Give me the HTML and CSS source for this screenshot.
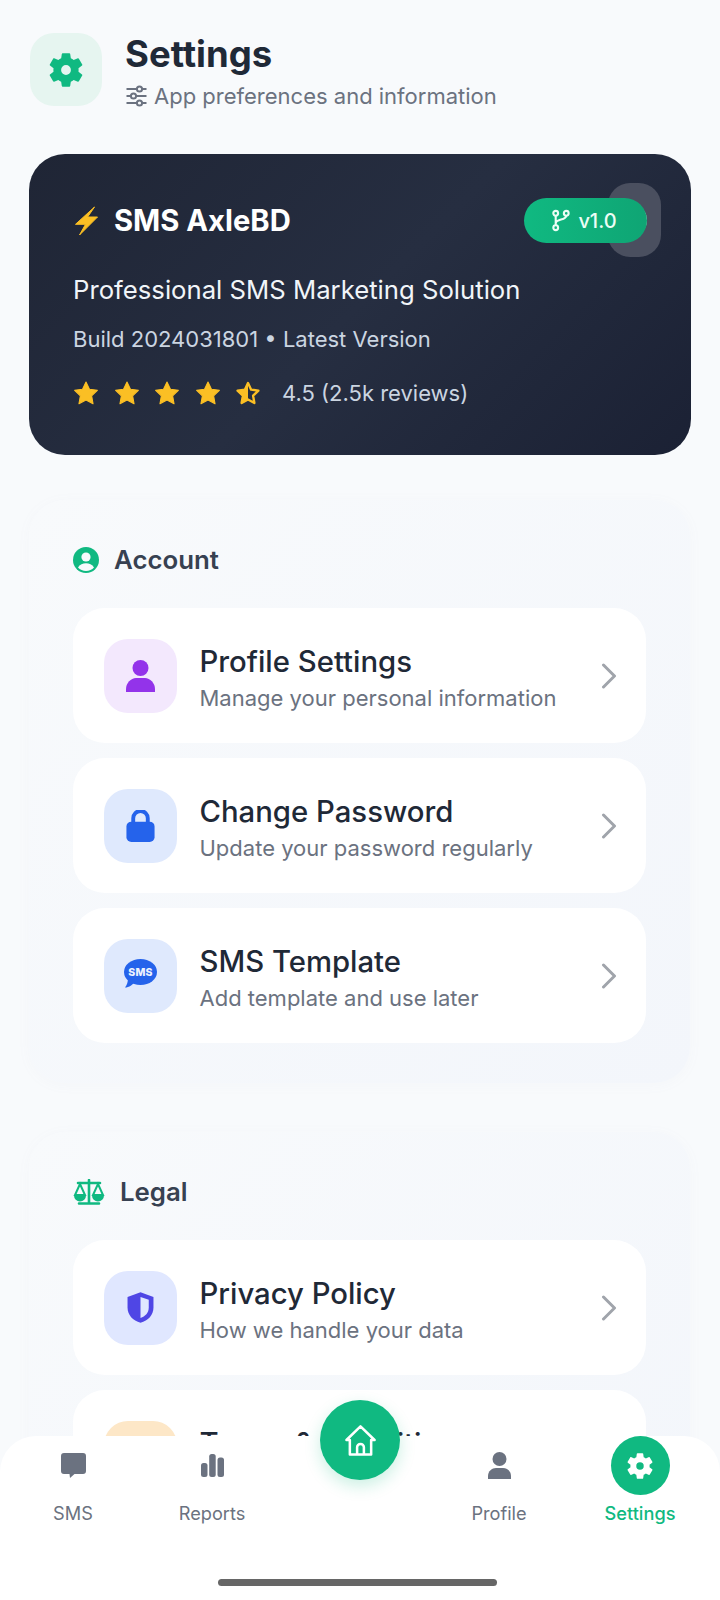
FILE: index.html
```html
<!DOCTYPE html>
<html lang="en">
<head>
<meta charset="utf-8">
<title>Settings</title>
<link rel="stylesheet" href="styles.css">
</head>
<body>
<svg class="defs" width="0" height="0" aria-hidden="true">
  <defs>
    <symbol id="gear" viewBox="0 0 24 24"><path fill-rule="evenodd" d="M19.14 12.94c.04-.3.06-.61.06-.94 0-.32-.02-.64-.07-.94l2.03-1.58a.49.49 0 0 0 .12-.61l-1.92-3.32a.488.488 0 0 0-.59-.22l-2.39.96c-.5-.38-1.03-.7-1.62-.94l-.36-2.54a.484.484 0 0 0-.48-.41h-3.84c-.24 0-.43.17-.47.41l-.36 2.54c-.59.24-1.13.57-1.62.94l-2.39-.96c-.22-.08-.47 0-.59.22L2.74 8.87c-.12.21-.08.47.12.61l2.03 1.58c-.05.3-.09.63-.09.94s.02.64.07.94l-2.03 1.58a.49.49 0 0 0-.12.61l1.92 3.32c.12.22.37.29.59.22l2.39-.96c.5.38 1.03.7 1.62.94l.36 2.54c.05.24.24.41.48.41h3.84c.24 0 .44-.17.47-.41l.36-2.54c.59-.24 1.13-.56 1.62-.94l2.39.96c.22.08.47 0 .59-.22l1.92-3.32c.12-.22.07-.47-.12-.61l-2.01-1.58zM12 14.8a2.8 2.8 0 1 1 0-5.6 2.8 2.8 0 0 1 0 5.6z"/></symbol>
    <symbol id="star" viewBox="0 0 24 24"><path d="M12 1.8l3.2 6.700 7.300 1-5.300 5.100 1.300 7.300-6.500-3.500-6.500 3.500 1.300-7.300L1.500 9.500l7.300-1z" stroke-linejoin="round"/></symbol>
    <symbol id="chev" viewBox="0 0 16 26"><path d="M2.500 2l11 11-11 11" fill="none" stroke="currentColor" stroke-width="3" stroke-linecap="round" stroke-linejoin="round"/></symbol>
  </defs>
</svg>

<main class="screen">
  <header class="top">
    <div class="top-icon"><svg class="gear-lg"><use href="#gear"/></svg></div>
    <div class="top-text">
      <h1>Settings</h1>
      <p class="sub">
        <svg class="sliders" viewBox="1.500 1 21 22"><path d="M2 5h20M2 12h20M2 19h20" stroke="currentColor" stroke-width="2" fill="none"/><circle cx="15" cy="5" r="2.600" fill="#f8fafc" stroke="currentColor" stroke-width="2"/><circle cx="9" cy="12" r="2.600" fill="#f8fafc" stroke="currentColor" stroke-width="2"/><circle cx="15" cy="19" r="2.600" fill="#f8fafc" stroke="currentColor" stroke-width="2"/></svg>
        App preferences and information
      </p>
    </div>
  </header>

  <section class="hero">
    <div class="hero-blob"><span class="blob-glyph"></span></div>
    <div class="hero-head">
      <div class="brand">
        <svg class="bolt" viewBox="0 0 25 30"><path d="M20.500 1L1.500 18.300h10L5.500 29 23.500 11H13.600z" fill="#fbbf24" stroke="#fbbf24" stroke-width="1" stroke-linejoin="round"/></svg>
        <h2>SMS AxleBD</h2>
      </div>
      <div class="pill">
        <svg class="branch" viewBox="0 0 24 24" fill="none" stroke="currentColor" stroke-width="2.200"><circle cx="7" cy="4.500" r="2.500"/><circle cx="7" cy="19.500" r="2.500"/><circle cx="18" cy="4.500" r="2.500"/><path d="M7 7v10M18 7c0 5-11 3-11 8"/></svg>
        v1.0
      </div>
    </div>
    <p class="tagline">Professional SMS Marketing Solution</p>
    <p class="build">Build 2024031801 • Latest Version</p>
    <div class="rating">
      <div class="stars">
        <svg class="star"><use href="#star"/></svg>
        <svg class="star"><use href="#star"/></svg>
        <svg class="star"><use href="#star"/></svg>
        <svg class="star"><use href="#star"/></svg>
        <svg class="star star-half" viewBox="0 0 24 24"><path d="M12 2.800l2.900 6.100 6.700.9-4.900 4.700 1.200 6.700-5.900-3.200-5.900 3.200 1.200-6.700-4.900-4.700 6.700-.9z" fill="none" stroke-width="2.200" stroke-linejoin="round"/><path d="M12 1.800v16.800l-6.500 3.500 1.300-7.300L1.500 9.800l7.300-1z" stroke="none"/></svg>
      </div>
      <span class="rating-text">4.5 (2.5k reviews)</span>
    </div>
  </section>

  <section class="group">
    <div class="group-head">
      <svg class="acct" viewBox="0 0 26 26"><circle cx="13" cy="13" r="13" fill="#10b981"/><circle cx="13" cy="10" r="4.600" fill="#f8fafc"/><path d="M5 20.500c1.800-3 4.800-4.200 8-4.200s6.200 1.200 8 4.200C19 22.800 16.200 24 13 24s-6-1.200-8-3.500z" fill="#f8fafc"/></svg>
      <h3>Account</h3>
    </div>
    <div class="items">
      <article class="item">
        <div class="item-icon tint-purple"><svg class="glyph c-purple" viewBox="0 0 29 32"><circle cx="14.500" cy="8" r="8"/><path d="M0 29c0-6 5-11 10-11h9c5 0 10 5 10 11v3H0z"/></svg></div>
        <div class="item-text"><h4>Profile Settings</h4><p>Manage your personal information</p></div>
        <svg class="chev"><use href="#chev"/></svg>
      </article>
      <article class="item">
        <div class="item-icon tint-blue"><svg class="glyph c-blue" viewBox="0 0 29 33"><rect y="12" width="29" height="21" rx="5"/><path d="M7 14V8.500a7.500 7.500 0 0 1 15 0V14" fill="none" stroke="#2563eb" stroke-width="4"/></svg></div>
        <div class="item-text"><h4>Change Password</h4><p>Update your password regularly</p></div>
        <svg class="chev"><use href="#chev"/></svg>
      </article>
      <article class="item">
        <div class="item-icon tint-blue">
          <div class="sms-badge"><svg class="sms-tail" viewBox="0 0 10 10"><path d="M3 0C3 4 2 7 0 9.500 4 9.500 8 7 10 3z"/></svg><span>SMS</span></div>
        </div>
        <div class="item-text"><h4>SMS Template</h4><p>Add template and use later</p></div>
        <svg class="chev"><use href="#chev"/></svg>
      </article>
    </div>
  </section>

  <section class="group group-legal">
    <div class="group-head legal-head">
      <svg class="scale" viewBox="0 0 32 26" fill="none" stroke="#10b981" stroke-width="2.600"><path d="M16 1v22M5 4h22M6 24.500h20" stroke-linecap="round"/><path d="M7 5L2 16h10zM25 5l-5 11h10z" stroke-width="2"/><path d="M1 16.500a6 6 0 0 0 12 0zM19 16.500a6 6 0 0 0 12 0z" fill="#10b981" stroke="none"/></svg>
      <h3>Legal</h3>
    </div>
    <div class="items">
      <article class="item">
        <div class="item-icon tint-indigo"><svg class="glyph shield" viewBox="0 0 24 28"><path d="M12 1L23 5v9c0 6.500-4.500 11-11 13C5.500 25 1 20.500 1 14V5z" fill="#4f46e5"/><path d="M12 5l7 2.500V14c0 4.500-3 7.500-7 9z" fill="#e0e7ff"/></svg></div>
        <div class="item-text"><h4>Privacy Policy</h4><p>How we handle your data</p></div>
        <svg class="chev"><use href="#chev"/></svg>
      </article>
      <article class="item">
        <div class="item-icon tint-orange"></div>
        <div class="item-text"><h4>Terms &amp; Conditions</h4><p>Rules and guidelines</p></div>
        <svg class="chev"><use href="#chev"/></svg>
      </article>
    </div>
  </section>
</main>

<nav class="nav">
  <a class="nav-item">
    <span class="nav-icon"><svg class="ni-chat" viewBox="0 0 25 25"><path d="M3 0h19a3 3 0 0 1 3 3v15a3 3 0 0 1-3 3H13.500L9 25l-.5-4H3a3 3 0 0 1-3-3V3a3 3 0 0 1 3-3z"/></svg></span>
    <span class="nav-label">SMS</span>
  </a>
  <a class="nav-item">
    <span class="nav-icon"><svg class="ni-bars" viewBox="0 0 23 23"><rect x="0" y="9" width="6.500" height="14" rx="2.500"/><rect x="8.200" y="0" width="6.500" height="23" rx="2.500"/><rect x="16.500" y="3.500" width="6.500" height="19.500" rx="2.500"/></svg></span>
    <span class="nav-label">Reports</span>
  </a>
  <a class="nav-item">
    <span class="nav-icon"><svg class="ni-person" viewBox="0 0 23 27"><circle cx="11.500" cy="7" r="7"/><path d="M0 24c0-5 4-8 8-8h7c4 0 8 3 8 8v3H0z"/></svg></span>
    <span class="nav-label">Profile</span>
  </a>
  <a class="nav-item active">
    <span class="nav-icon"><svg class="ni-gear"><use href="#gear"/></svg></span>
    <span class="nav-label">Settings</span>
  </a>
  <button class="fab" type="button" aria-label="Home">
    <svg viewBox="0 0 32 32" fill="none" stroke="#fff" stroke-width="2.600" stroke-linejoin="round" stroke-linecap="round"><path d="M1.500 15.500L16 1.500l14.500 14H27V30.500H5V15.500zM12.500 30.500V23a3.500 3.500 0 0 1 7 0v7.500"/></svg>
  </button>
  <div class="home-bar"></div>
</nav>
</body>
</html>
```

FILE: styles.css
```css
* { box-sizing: border-box; margin: 0; padding: 0; }
html, body { height: 1600px; overflow: hidden; }
body {
  font-family: Inter, "Noto Sans", "Liberation Sans", sans-serif;
  background: #f8fafc;
  color: #1f2937;
  position: relative;
}
.defs { position: absolute; }

.screen { padding: 33px 30px 0 29px; height: 1600px; overflow: hidden; }

.top { display: flex; gap: 23px; align-items: flex-start; margin-left: 1px; }
.top-icon {
  width: 72px; height: 73px; border-radius: 24px; background: #e6f5f0;
  display: flex; align-items: center; justify-content: center; flex: none;
}
.gear-lg { width: 42px; height: 42px; fill: #10b981; }
.top-text { padding-top: 1px; }
.top-text h1 { font-size: 36.500px; font-weight: 700; line-height: 40px; color: #1f2937; }
.sub {
  display: flex; align-items: center; gap: 6px;
  font-size: 22px; line-height: 32px; color: #6b7280; margin-top: 6px;
}
.sliders { width: 23px; height: 22px; color: #6b7280; flex: none; }

.hero {
  position: relative; margin-top: 42px; width: 662px; height: 301px; border-radius: 36px;
  padding: 44px 44px 0 44px; color: #fff; overflow: hidden;
  background: linear-gradient(135deg, #1f2535 0%, #262e41 50%, #1b2134 100%);
}
.hero-blob {
  position: absolute; left: 579px; top: 29px; width: 53px; height: 74px; border-radius: 22px;
  background: #4a4f5f;
}
.blob-glyph {
  position: absolute; left: 23px; top: 25px; width: 16px; height: 24px; border-radius: 50%;
  border: 3px solid #e5e7eb;
}
.hero-head { position: relative; display: flex; justify-content: space-between; align-items: center; height: 45px; padding-right: 1px; }
.brand { display: flex; align-items: center; gap: 15px; padding-left: 1px; }
.bolt { width: 25px; height: 30px; flex: none; }
.brand h2 { font-size: 29.200px; font-weight: 700; line-height: 34px; }
.pill {
  display: flex; align-items: center; justify-content: center; gap: 6px;
  width: 123px; height: 45px; border-radius: 23px; padding-right: 5px;
  background: linear-gradient(90deg, #10b981, #0fa574);
  font-size: 20px; font-weight: 500; color: #ecfdf5;
  position: relative; left: 1px;
}
.branch { width: 23px; height: 23px; }
.tagline { font-size: 25.700px; line-height: 36px; margin-top: 29px; color: #f1f5f9; }
.build { font-size: 22px; line-height: 30px; margin-top: 16px; color: #cbd5e1; }
.rating { display: flex; align-items: center; margin-top: 26px; }
.stars { display: flex; gap: 14.500px; }
.star { width: 26px; height: 26px; fill: #fbbf24; stroke: #fbbf24; stroke-width: 1; }
.rating-text { font-size: 22px; margin-left: 21px; color: #cbd5e1; line-height: 26px; }

.group {
  margin-top: 45px; width: 661px; border-radius: 36px; padding: 44px 44px 40px 44px;
  background: linear-gradient(135deg, #f8fafc 0%, #f3f6fb 100%);
  box-shadow: 0 2px 14px rgba(148, 163, 184, 0.04);
}
.group-legal { margin-top: 49px; }
.group-head { display: flex; align-items: center; gap: 15px; height: 32px; margin-bottom: 32px; }
.acct { width: 26px; height: 26px; flex: none; }
.scale { width: 32px; height: 26px; flex: none; }
.group-head h3 { font-size: 25.800px; font-weight: 600; color: #374151; line-height: 32px; }

.items { display: flex; flex-direction: column; gap: 15px; }
.item {
  display: flex; align-items: center; height: 135px; width: 573px; padding: 0 29px 0 31px;
  background: #fff; border-radius: 32px;
}
.item-icon {
  width: 73px; height: 74px; border-radius: 24px; flex: none;
  display: flex; align-items: center; justify-content: center;
}
.tint-purple { background: #f3e8fd; }
.tint-blue { background: #dfe9fd; }
.tint-indigo { background: #e0e7ff; }
.tint-orange { background: #fde7c7; }
.glyph { width: 29px; height: 32px; }
.c-purple { fill: #9333ea; }
.c-blue { fill: #2563eb; }
.shield { width: 31px; height: 33px; }
.sms-badge {
  position: relative; width: 33px; height: 26px; border-radius: 50%; background: #2563eb;
  display: flex; align-items: center; justify-content: center; margin-top: -7px;
}
.sms-badge span { font-size: 10.500px; font-weight: 800; color: #eef3fe; letter-spacing: 0.2px; position: relative; }
.sms-tail { position: absolute; left: 1px; top: 19px; width: 10px; height: 10px; fill: #2563eb; }
.item-text { flex: 1; margin-left: 22.500px; padding-top: 5px; }
.item-text h4 { font-size: 29.300px; font-weight: 500; line-height: 36px; color: #1f2937; }
.item-text p { font-size: 22px; line-height: 30px; color: #6b7280; margin-top: 3px; }
.chev { width: 16px; height: 26px; color: #a0a4ab; flex: none; }

.nav {
  position: absolute; left: 0; right: 0; top: 1436px; height: 164px; background: #fff;
  border-radius: 36px 36px 0 0;
}
.nav-item {
  position: absolute; top: 0; display: flex; flex-direction: column; align-items: center;
  width: 100px; color: #6b7280;
}
.nav-item:nth-child(1) { left: 23px; }
.nav-item:nth-child(2) { left: 162px; }
.nav-item:nth-child(3) { left: 449px; }
.nav-item:nth-child(4) { left: 590px; }
.nav-icon { height: 59px; display: flex; align-items: center; justify-content: center; width: 59px; }
.ni-chat { width: 25px; height: 25px; fill: #6b7280; }
.ni-bars { width: 23px; height: 23px; fill: #6b7280; }
.ni-person { width: 23px; height: 27px; fill: #6b7280; }
.ni-gear { width: 32px; height: 32px; fill: #fff; }
.active .nav-icon { background: #10b981; border-radius: 50%; }
.nav-label { font-size: 18.200px; line-height: 24px; margin-top: 6px; color: #6b7280; }
.active .nav-label { color: #10b981; font-weight: 500; }
.fab {
  position: absolute; left: 320px; top: -36px; width: 80px; height: 80px; border: 0; border-radius: 50%;
  background: #10b981; box-shadow: 0 6px 16px rgba(16, 185, 129, 0.22);
  display: flex; align-items: center; justify-content: center;
}
.fab svg { width: 31px; height: 31px; }
.home-bar {
  position: absolute; left: 218px; top: 143px; width: 279px; height: 7px; border-radius: 4px; background: #666;
}
```
